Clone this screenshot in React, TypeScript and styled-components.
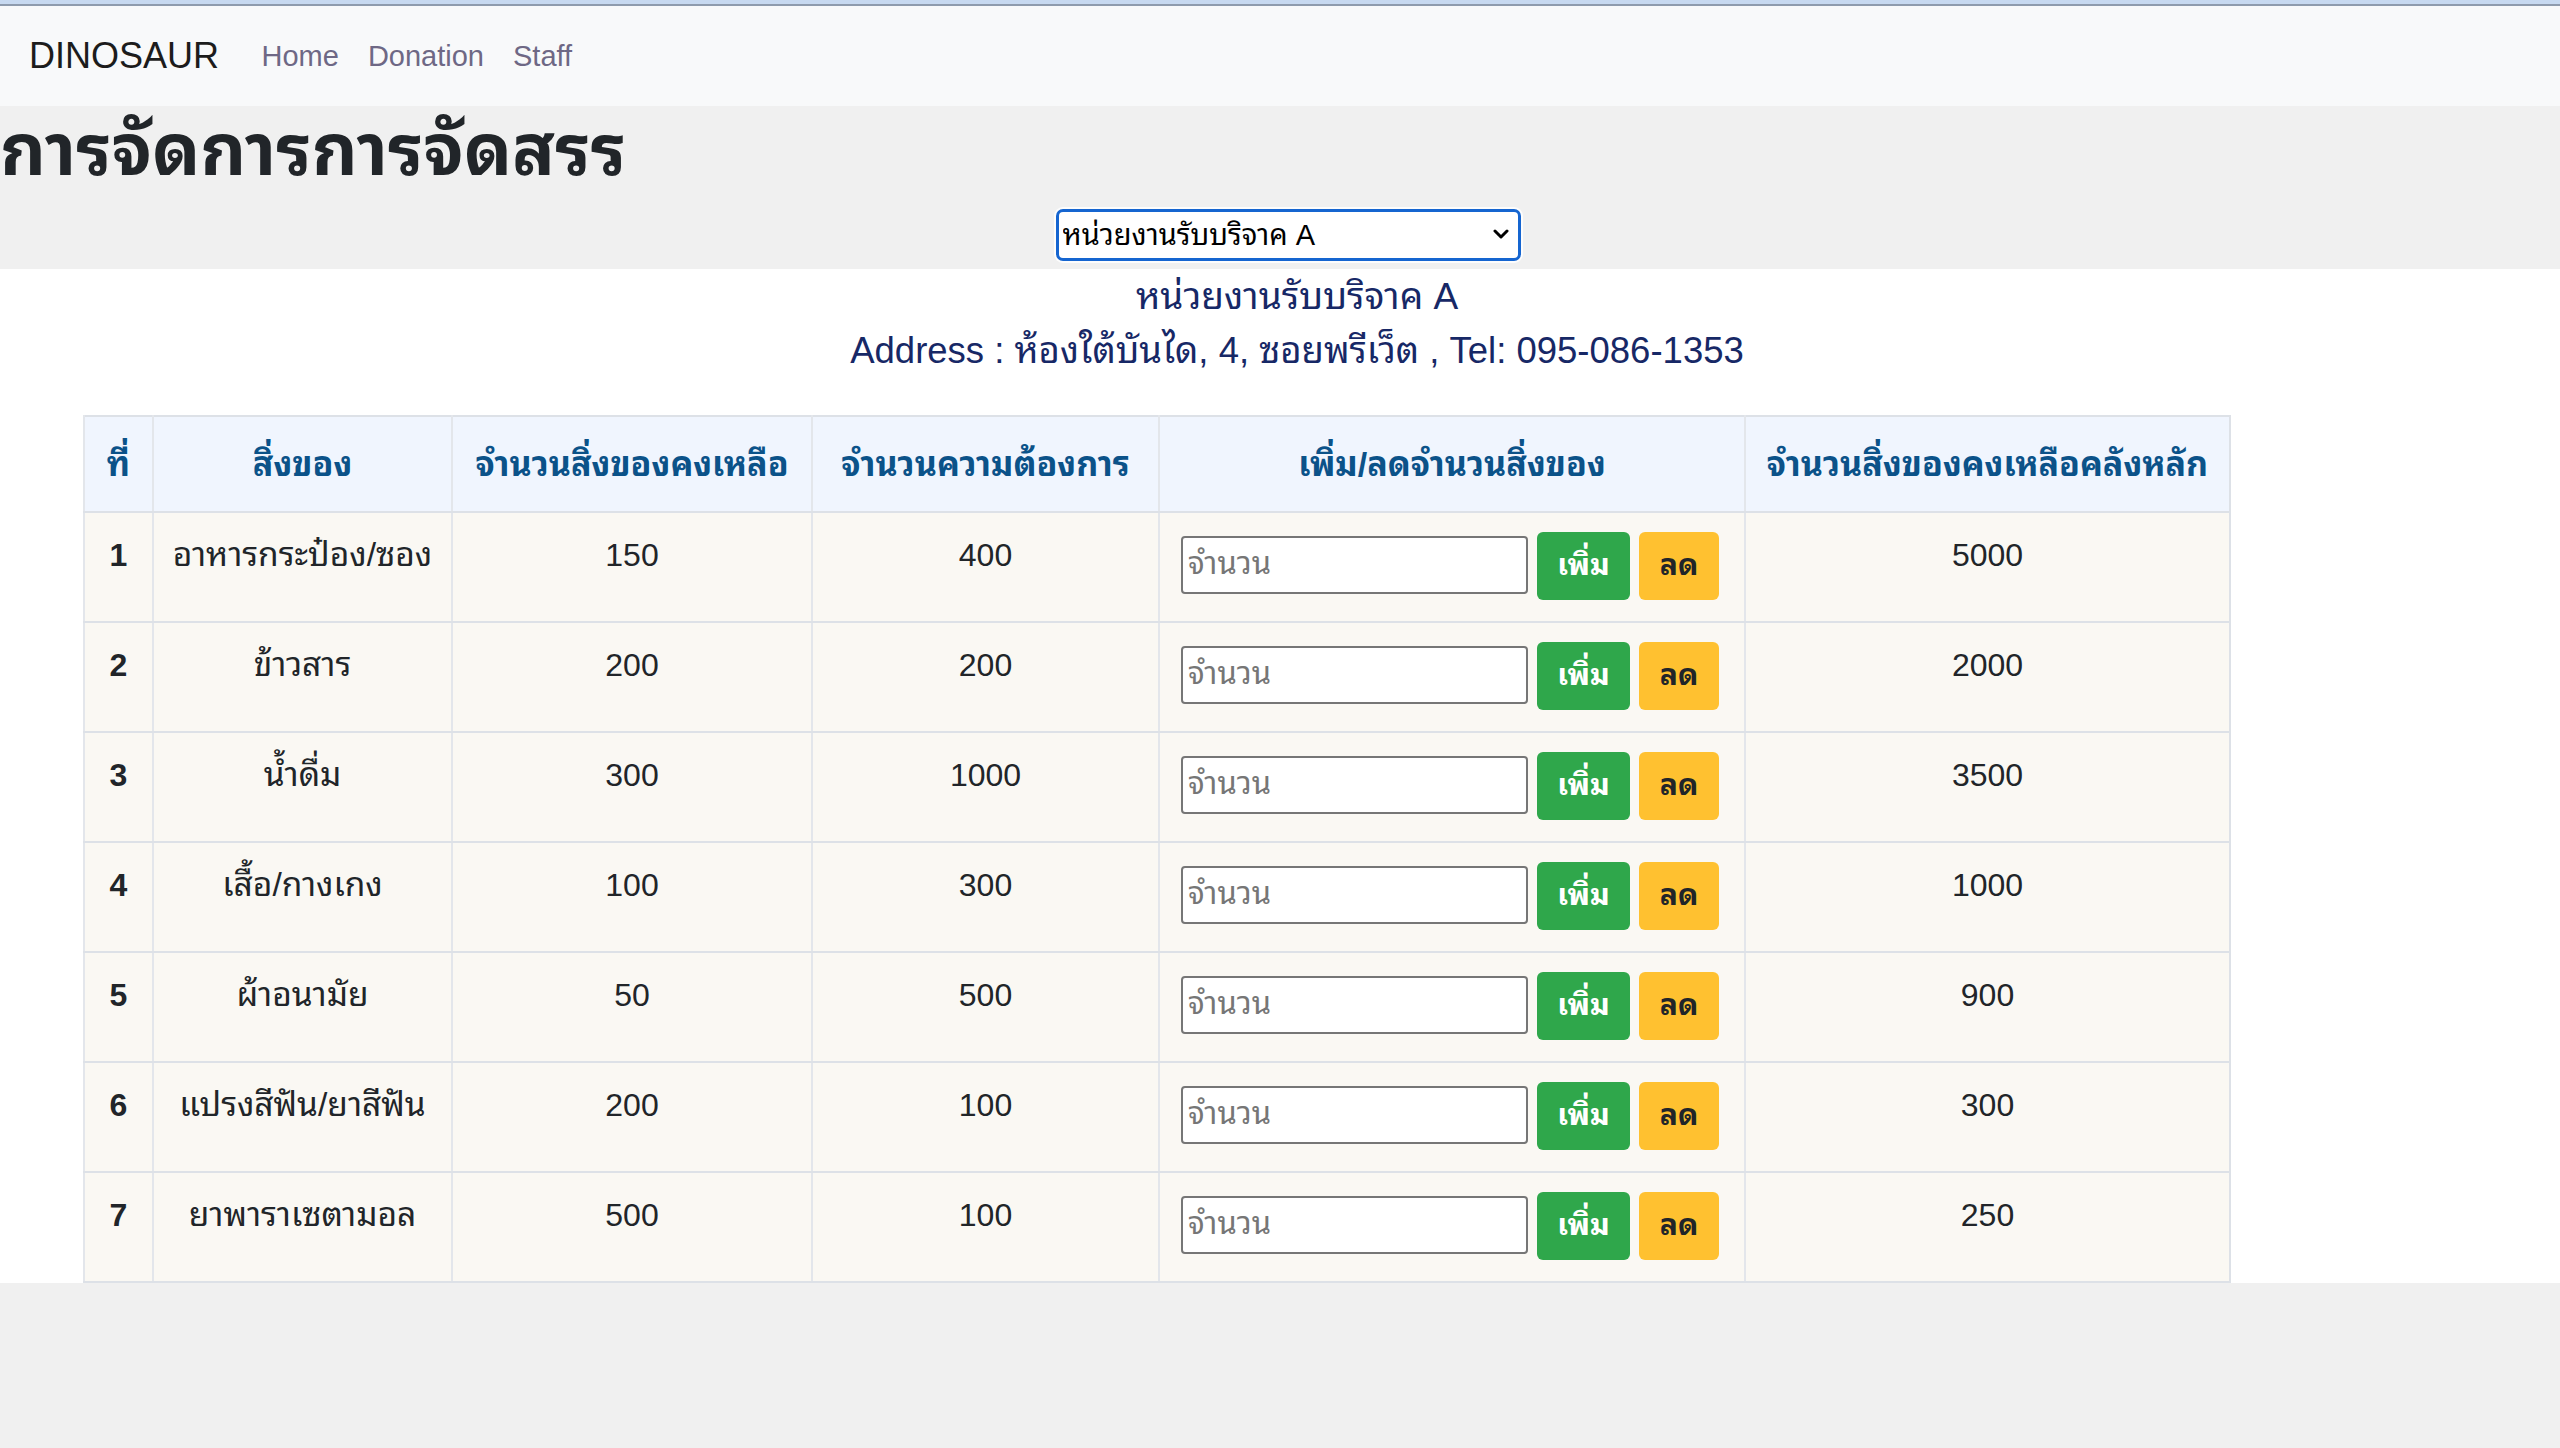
import React from "react";
import styled, { createGlobalStyle } from "styled-components";

const FONT = `"Liberation Sans", "Noto Sans Thai Looped", "Noto Sans Thai", "Noto Sans", sans-serif`;

const GlobalStyle = createGlobalStyle`
  html, body { margin: 0; padding: 0; }
  body {
    background: #f0f0f0;
    font-family: ${FONT};
    color: #212529;
  }
  * { box-sizing: border-box; }
`;

const TopStrip = styled.div`
  height: 6px;
  background: #c7d9f0;
  border-bottom: 2px solid #8e9bad;
`;

const Navbar = styled.nav`
  height: 100px;
  background: #f8f9fa;
  display: flex;
  align-items: center;
  padding-left: 29px;
`;

const Brand = styled.span`
  font-size: 36px;
  color: #1c1c1c;
  margin-right: 28px;
`;

const NavLink = styled.a`
  font-size: 29px;
  color: #6e6885;
  padding: 0 14.5px;
  text-decoration: none;
`;

const HeaderSection = styled.section`
  height: 163px;
  display: flex;
  flex-direction: column;
`;

const Title = styled.h1`
  margin: 0;
  font-size: 71px;
  font-weight: 700;
  line-height: 90px;
  color: #212529;
`;

const SelectRow = styled.div<{ shift: number }>`
  display: flex;
  justify-content: center;
  padding-left: ${(p) => p.shift}px;
  margin-top: 13px;
`;

const SelectBox = styled.div`
  position: relative;
  width: 465px;
  height: 52px;
`;

const Select = styled.select`
  appearance: none;
  width: 100%;
  height: 100%;
  border: 3px solid #1565d0;
  border-radius: 7px;
  background: #fff;
  font-family: ${FONT};
  font-size: 29px;
  color: #000;
  padding: 0 40px 0 4px;
  box-shadow: 0 0 0 2px rgba(255, 255, 255, 0.85);
  outline: none;
`;

const Chevron = styled.svg`
  position: absolute;
  right: 12px;
  top: 19px;
  width: 16px;
  height: 12px;
  pointer-events: none;
`;

const MainSection = styled.section`
  background: #fff;
`;

const InfoLine = styled.div<{ size: number; shift: number }>`
  text-align: center;
  font-size: ${(p) => p.size}px;
  color: #172866;
  padding-left: ${(p) => p.shift}px;
  line-height: 54px;
`;

const InfoBlock = styled.div`
  padding-top: 1px;
  padding-bottom: 37px;
`;

const TableWrap = styled.div`
  padding-left: 83px;
`;

const Table = styled.table`
  width: 2146px;
  border-collapse: collapse;
  table-layout: fixed;
  border: 2px solid #dde1e7;
`;

const Th = styled.th`
  height: 96px;
  background: #f0f5fe;
  color: #0b5289;
  font-size: 34px;
  line-height: 48px;
  font-weight: 700;
  text-align: center;
  vertical-align: middle;
  border-bottom: 2px solid #dde1e7;
  border-left: 2px solid #e3e6eb;
  padding: 0 4px;
  white-space: nowrap;
`;

const Tr = styled.tr`
  background: #faf8f3;
`;

const Td = styled.td<{ bold?: boolean; size?: number }>`
  height: 110px;
  font-size: ${(p) => p.size ?? 32}px;
  line-height: 46px;
  font-weight: ${(p) => (p.bold ? 700 : 400)};
  text-align: center;
  vertical-align: top;
  padding: 19px 8px 0;
  border-bottom: 2px solid #dde1e7;
  border-left: 2px solid #e3e6eb;
  color: #212529;
`;

const ActionCell = styled.div`
  display: flex;
  align-items: flex-start;
  gap: 9px;
  padding-left: 13px;
`;

const QtyInput = styled.input`
  width: 347px;
  height: 58px;
  margin-top: 4px;
  border: 2px solid #767676;
  border-radius: 4px;
  background: #fff;
  font-family: ${FONT};
  font-size: 31px;
  line-height: 40px;
  padding: 0 5px 3px;
  &::placeholder { color: #767676; }
`;

const Btn = styled.button<{ variant: "add" | "sub" }>`
  height: 68px;
  width: ${(p) => (p.variant === "add" ? 93 : 80)}px;
  border: none;
  border-radius: 6px;
  background: ${(p) => (p.variant === "add" ? "#2fa74b" : "#ffc130")};
  color: ${(p) => (p.variant === "add" ? "#fff" : "#212529")};
  font-family: ${FONT};
  font-size: 30px;
  line-height: 40px;
  font-weight: 700;
  padding: 0 0 2px;
`;

const rows = [
  [1, "อาหารกระป๋อง/ซอง", 150, 400, 5000],
  [2, "ข้าวสาร", 200, 200, 2000],
  [3, "น้ำดื่ม", 300, 1000, 3500],
  [4, "เสื้อ/กางเกง", 100, 300, 1000],
  [5, "ผ้าอนามัย", 50, 500, 900],
  [6, "แปรงสีฟัน/ยาสีฟัน", 200, 100, 300],
  [7, "ยาพาราเซตามอล", 500, 100, 250],
] as const;

const widths = [69, 299, 360, 347, 586, 485];
const headers = [
  "ที่",
  "สิ่งของ",
  "จำนวนสิ่งของคงเหลือ",
  "จำนวนความต้องการ",
  "เพิ่ม/ลดจำนวนสิ่งของ",
  "จำนวนสิ่งของคงเหลือคลังหลัก",
];

export default function App() {
  return (
    <>
      <GlobalStyle />
      <TopStrip />
      <Navbar>
        <Brand>DINOSAUR</Brand>
        <NavLink href="#">Home</NavLink>
        <NavLink href="#">Donation</NavLink>
        <NavLink href="#">Staff</NavLink>
      </Navbar>
      <HeaderSection>
        <Title>การจัดการการจัดสรร</Title>
        <SelectRow shift={16}>
          <SelectBox>
            <Select defaultValue="A">
              <option value="A">หน่วยงานรับบริจาค A</option>
              <option value="B">หน่วยงานรับบริจาค B</option>
            </Select>
            <Chevron viewBox="0 0 16 12">
              <path d="M2 3 L8 9 L14 3" fill="none" stroke="#000" strokeWidth="3" strokeLinecap="round" strokeLinejoin="round" />
            </Chevron>
          </SelectBox>
        </SelectRow>
      </HeaderSection>
      <MainSection>
        <InfoBlock>
          <InfoLine size={37} shift={34}>หน่วยงานรับบริจาค A</InfoLine>
          <InfoLine size={36.5} shift={34}>
            Address : ห้องใต้บันได, 4, ซอยพรีเว็ต , Tel: 095-086-1353
          </InfoLine>
        </InfoBlock>
        <TableWrap>
          <Table>
            <colgroup>
              {widths.map((w, i) => (
                <col key={i} style={{ width: w }} />
              ))}
            </colgroup>
            <thead>
              <tr>
                {headers.map((h) => (
                  <Th key={h}>{h}</Th>
                ))}
              </tr>
            </thead>
            <tbody>
              {rows.map(([n, name, left, need, main]) => (
                <Tr key={n}>
                  <Td bold>{n}</Td>
                  <Td size={33.5}>{name}</Td>
                  <Td>{left}</Td>
                  <Td>{need}</Td>
                  <Td>
                    <ActionCell>
                      <QtyInput placeholder="จำนวน" />
                      <Btn variant="add">เพิ่ม</Btn>
                      <Btn variant="sub">ลด</Btn>
                    </ActionCell>
                  </Td>
                  <Td>{main}</Td>
                </Tr>
              ))}
            </tbody>
          </Table>
        </TableWrap>
      </MainSection>
    </>
  );
}
